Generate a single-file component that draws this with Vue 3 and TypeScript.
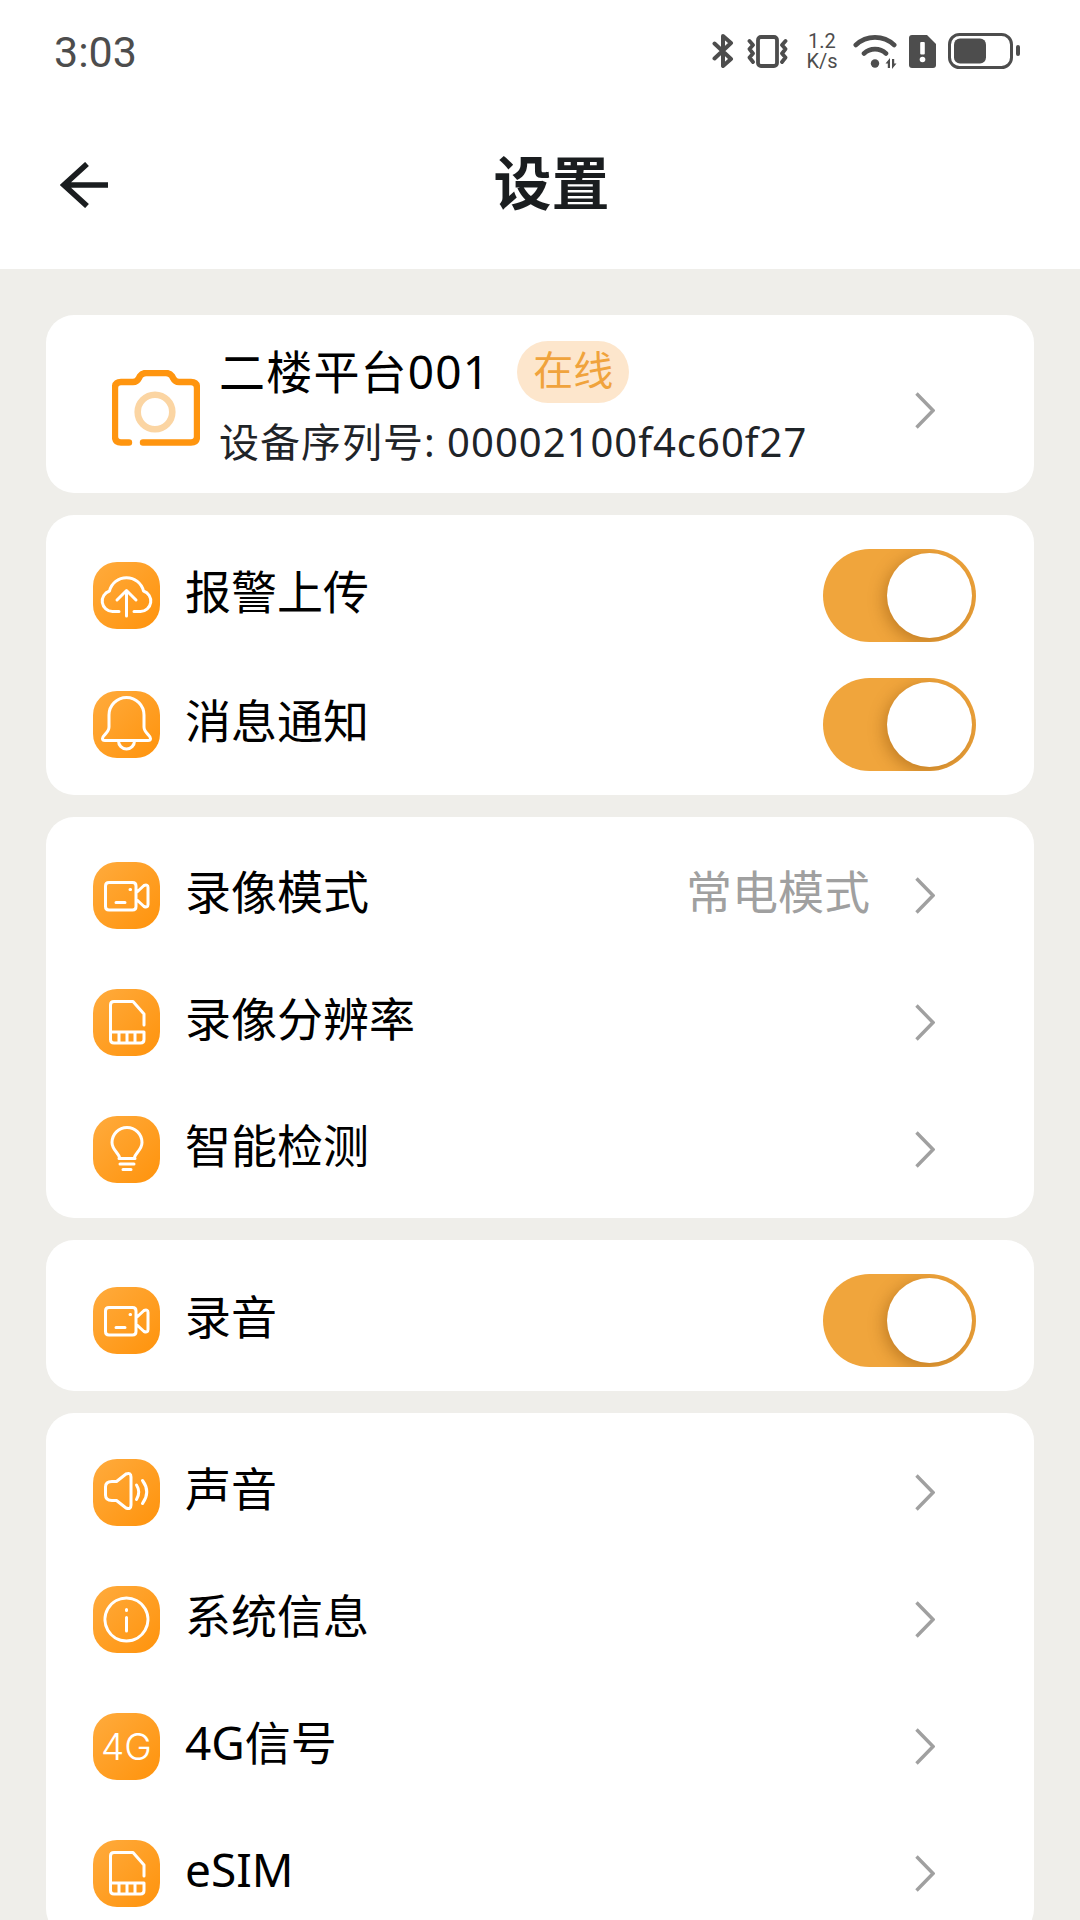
<script setup lang="ts">
interface Row {
  label: string
  icon: string
  kind: 'toggle' | 'link'
  value?: string
}
interface Group {
  cls: string
  rows: Row[]
}

const paths: Record<string, string> = {
  cloud:
    'M26 49.5H19.5A10.5 10.5 0 0 1 16.5 29A17.5 17.5 0 0 1 50.5 29A10.5 10.5 0 0 1 47.5 49.5H41M33.5 54V29M24 38L33.5 28.5L43 38',
  bell:
    'M16 36V24A17.5 17.5 0 0 1 51 24V36C51 42 57.5 44 57.5 47.5Q57.5 49.5 55 49.5H12Q9.5 49.5 9.5 47.5C9.5 44 16 42 16 36ZM25.5 50A8 8 0 0 0 41.5 50',
  video:
    'M16 20.5H39.5Q43 20.5 43 24V44.5Q43 48 39.5 48H16Q12.5 48 12.5 44.5V24Q12.5 20.5 16 20.5ZM23 40.5H32M37 27.5H37.6M44 30L51 23.5Q55 22 55 25.5V42.5Q55 46 51 44.5L44 38',
  sd:
    'M51 36V25L40 12.5H21Q17.5 12.5 17.5 16V50.5Q17.5 54 21 54H47.5Q51 54 51 50.5V43H17.5M26 43V54M34 43V54M42 43V54',
  bulb:
    'M27 42.5C26 37 19 34 19 26.5A15 15 0 0 1 49 26.5C49 34 42 37 41 42.5ZM26 42.5H42M27 48H41M30 53.5H38',
  speaker:
    'M19 22.5H23.5L33 15Q38 13 38 18V46Q38 51 33 49L23.5 41.5H19Q12.5 41.5 12.5 36V28Q12.5 22.5 19 22.5ZM43.5 26Q48 33 43.5 40.5M49.5 21.5Q58 33 49.5 44.5',
  info:
    'M33.5 12A21.5 21.5 0 1 1 33.4 12ZM33.5 31.5V45M33.5 23.5V24.5'
}

const groups: Group[] = [
  {
    cls: 'g-alert',
    rows: [
      { label: '报警上传', icon: 'cloud', kind: 'toggle' },
      { label: '消息通知', icon: 'bell', kind: 'toggle' }
    ]
  },
  {
    cls: 'g-record',
    rows: [
      { label: '录像模式', icon: 'video', kind: 'link', value: '常电模式' },
      { label: '录像分辨率', icon: 'sd', kind: 'link' },
      { label: '智能检测', icon: 'bulb', kind: 'link' }
    ]
  },
  {
    cls: 'g-audio',
    rows: [{ label: '录音', icon: 'video', kind: 'toggle' }]
  },
  {
    cls: 'g-system',
    rows: [
      { label: '声音', icon: 'speaker', kind: 'link' },
      { label: '系统信息', icon: 'info', kind: 'link' },
      { label: '4G信号', icon: '4g', kind: 'link' },
      { label: 'eSIM', icon: 'sd', kind: 'link' }
    ]
  }
]
</script>

<template>
  <div class="screen">
    <div class="status">
      <span class="time">3:03</span>
      <div class="status-icons">
        <svg class="st-bt" width="22" height="34" viewBox="0 0 22 34" fill="none" stroke="#4d4d4d" stroke-width="4" stroke-linecap="round" stroke-linejoin="round">
          <path d="M2.5 9.5L19 25L11 32V2L19 9L2.5 24.5" />
        </svg>
        <svg class="st-vib" width="41" height="33" viewBox="0 0 41 33" fill="none" stroke="#4d4d4d" stroke-width="3.8" stroke-linecap="round" stroke-linejoin="round">
          <rect x="11" y="2" width="19" height="29" rx="3" />
          <path d="M2.5 6L6 10L2.5 14L6 18.5L2.5 22.5L6 27M38.5 6L35 10L38.5 14L35 18.5L38.5 22.5L35 27" />
        </svg>
        <div class="st-speed">
          <span>1.2</span>
          <span>K/s</span>
        </div>
        <svg class="st-wifi" width="44" height="35" viewBox="0 0 44 35" fill="none" stroke="#4d4d4d" stroke-width="4.6" stroke-linecap="round">
          <path d="M2.8 11A28 28 0 0 1 41.2 11M11 19.5A16 16 0 0 1 33 19.5" />
          <circle cx="22" cy="29.5" r="4.2" fill="#4d4d4d" stroke="none" />
          <path d="M32.5 29.5L37 24V34H34.8V29.5ZM43.5 29.5L39 35V25H41.2V29.5Z" fill="#4d4d4d" stroke="none" />
        </svg>
        <svg class="st-sim" width="27" height="33" viewBox="0 0 27 33">
          <path d="M3 0H18L27 9V30A3 3 0 0 1 24 33H3A3 3 0 0 1 0 30V3A3 3 0 0 1 3 0Z" fill="#4d4d4d" />
          <rect x="11.2" y="7" width="4.6" height="12.5" rx="1" fill="#fff" />
          <circle cx="13.5" cy="24.5" r="2.8" fill="#fff" />
        </svg>
        <svg class="st-bat" width="73" height="36" viewBox="0 0 73 36">
          <rect x="1.5" y="1.5" width="62" height="33" rx="10" fill="none" stroke="#4d4d4d" stroke-width="3" />
          <rect x="6" y="5.5" width="32" height="25" rx="6" fill="#4d4d4d" />
          <rect x="68" y="12" width="4" height="11" rx="2" fill="#4d4d4d" />
        </svg>
      </div>
    </div>

    <header class="nav">
      <svg class="back" width="48" height="46" viewBox="0 0 48 46" fill="none" stroke="#1a1d1f" stroke-width="5.6">
        <path d="M48 23H4M27 2L4 23L27 44" />
      </svg>
      <h1 class="title">设置</h1>
    </header>

    <main class="content">
      <section class="card device">
        <svg class="camera" width="88" height="76" viewBox="0 0 88 76" fill="none" stroke-linecap="round" stroke-linejoin="round">
          <path d="M17 72.5H9Q3 72.5 3 66.5V18Q3 12 9 12H21Q25 12 27 8L28 6Q30 3 34 3H54Q58 3 60 6L61 8Q63 12 67 12H79Q85 12 85 18V66.5Q85 72.5 79 72.5H31" stroke="#ff950f" stroke-width="6.4" />
          <circle cx="43" cy="42" r="17.3" stroke="#fbd5a3" stroke-width="6.6" />
        </svg>
        <div class="device-text">
          <div class="device-name">
            <span class="name-text">二楼平台001</span>
            <span class="badge">在线</span>
          </div>
          <div class="serial">设备序列号: 00002100f4c60f27</div>
        </div>
        <svg class="chevron" width="20" height="37" viewBox="0 0 20 37" fill="none" stroke="#a0a0a0" stroke-width="3.4">
          <path d="M1.5 1.5L18 18.5L1.5 35.5" />
        </svg>
      </section>

      <section v-for="group in groups" :key="group.cls" class="card" :class="group.cls">
        <div v-for="row in group.rows" :key="row.label" class="row">
          <div class="tile">
            <span v-if="row.icon === '4g'" class="tile-text">4G</span>
            <svg v-else width="67" height="67" viewBox="0 0 67 67" fill="none" stroke="#fff" stroke-width="3" stroke-linecap="round" stroke-linejoin="round">
              <path :d="paths[row.icon]" />
            </svg>
          </div>
          <span class="label">{{ row.label }}</span>
          <div v-if="row.kind === 'toggle'" class="toggle">
            <span class="knob"></span>
          </div>
          <template v-else>
            <span v-if="row.value" class="value">{{ row.value }}</span>
            <svg class="chevron" width="20" height="37" viewBox="0 0 20 37" fill="none" stroke="#a0a0a0" stroke-width="3.4">
              <path d="M1.5 1.5L18 18.5L1.5 35.5" />
            </svg>
          </template>
        </div>
      </section>
    </main>
  </div>
</template>

<style>
html,
body {
  margin: 0;
  overflow: hidden;
}
</style>

<style scoped>
.screen {
  width: 1080px;
  height: 1920px;
  overflow: hidden;
  display: flex;
  flex-direction: column;
  background: #efeeea;
  font-family: "Noto Sans", "Noto Sans CJK SC", sans-serif;
  color: #000;
}
.status {
  height: 100px;
  flex: none;
  background: #fff;
  display: flex;
  align-items: center;
  justify-content: space-between;
  padding: 2px 59px 0 54px;
  box-sizing: border-box;
}
.time {
  font-family: Roboto, sans-serif;
  font-size: 43px;
  color: #4d4d4d;
  line-height: 1;
  margin-top: 2px;
}
.status-icons {
  display: flex;
  align-items: center;
}
.st-vib {
  margin-left: 13px;
}
.st-speed {
  margin-left: 18px;
  width: 32px;
  display: flex;
  flex-direction: column;
  align-items: center;
  font-family: Roboto, sans-serif;
  font-size: 20px;
  line-height: 20px;
  color: #4d4d4d;
}
.st-wifi {
  margin-left: 15px;
}
.st-sim {
  margin-left: 12px;
}
.st-bat {
  margin-left: 12px;
}
.nav {
  height: 169px;
  flex: none;
  background: #fff;
  position: relative;
  display: flex;
  align-items: center;
  justify-content: center;
}
.back {
  position: absolute;
  left: 60px;
  top: 62px;
}
.title {
  margin: 0 0 3px 23px;
  font-size: 58px;
  font-weight: 700;
  line-height: 70px;
  color: #1a1d1f;
}
.content {
  padding: 46px 46px 0;
  display: flex;
  flex-direction: column;
  gap: 22px;
}
.card {
  background: #fff;
  border-radius: 28px;
  flex: none;
}
.device {
  height: 178px;
  box-sizing: border-box;
  display: flex;
  align-items: center;
  padding: 0 99px 0 66px;
}
.camera {
  flex: none;
  margin-top: 8px;
}
.device-text {
  margin-left: 19px;
  flex: 1;
  padding-bottom: 2px;
}
.device-name {
  display: flex;
  align-items: center;
  gap: 27px;
  font-size: 46px;
  line-height: 60px;
  margin-top: 5px;
}
.name-text {
  letter-spacing: 1.2px;
  margin-top: -3px;
}
.badge {
  height: 62px;
  padding: 0 16px;
  border-radius: 31px;
  background: #fde6cc;
  color: #f0a33c;
  font-size: 40px;
  line-height: 58px;
}
.serial {
  margin-top: 11px;
  font-size: 40px;
  line-height: 56px;
  letter-spacing: 1px;
  color: #1f2428;
}
.device .chevron {
  margin-top: 13px;
}
.row {
  height: 127px;
  display: flex;
  align-items: center;
  padding: 0 99px 0 47px;
}
.g-alert {
  padding: 16px 0 6px;
}
.g-alert .row {
  height: 129px;
}
.g-record {
  padding: 15px 0 5px;
}
.g-audio {
  padding: 17px 0 7px;
}
.g-system {
  padding: 16px 0 0;
}
.tile {
  width: 67px;
  height: 67px;
  flex: none;
  border-radius: 24px;
  background: linear-gradient(135deg, #ffab3d, #ff930c);
  display: flex;
  align-items: center;
  justify-content: center;
}
.tile svg {
  display: block;
}
.tile-text {
  font-family: Inter, sans-serif;
  font-weight: 300;
  font-size: 37px;
  line-height: 1;
  color: #fff;
}
.label {
  margin-left: 25px;
  flex: 1;
  font-size: 46px;
  line-height: 60px;
  padding-bottom: 10px;
}
.value {
  font-size: 46px;
  line-height: 60px;
  color: #a0a0a0;
  margin-right: 45px;
  padding-bottom: 10px;
}
.chevron {
  flex: none;
  display: block;
}
.toggle {
  width: 153px;
  height: 93px;
  margin-right: -41px;
  flex: none;
  box-sizing: border-box;
  border-radius: 47px;
  background: #f0a53c;
  display: flex;
  align-items: center;
  justify-content: flex-end;
  padding-right: 4px;
  overflow: hidden;
}
.knob {
  width: 85px;
  height: 85px;
  border-radius: 50%;
  background: #fff;
  box-shadow: -3px 4px 16px rgba(120, 65, 0, 0.4);
}
</style>
